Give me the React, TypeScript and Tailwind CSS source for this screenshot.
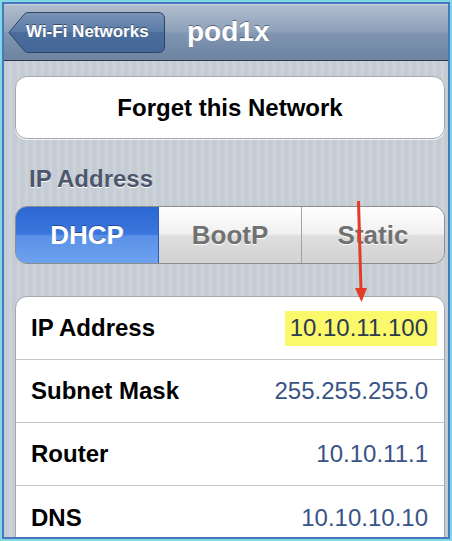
const rows = [
  { label: "IP Address", value: "10.10.11.100", mark: true },
  { label: "Subnet Mask", value: "255.255.255.0" },
  { label: "Router", value: "10.10.11.1" },
  { label: "DNS", value: "10.10.10.10" },
];

function BackButton() {
  return (
    <div className="relative w-[157px] h-[41px] flex items-center">
      <svg className="absolute inset-0" width="157" height="41" viewBox="0 0 157 41">
        <defs>
          <linearGradient id="bb" x1="0" y1="0" x2="0" y2="1">
            <stop offset="0" stopColor="#7b93b6" />
            <stop offset="0.5" stopColor="#587aa6" />
            <stop offset="0.5" stopColor="#4b6d9b" />
            <stop offset="1" stopColor="#44679a" />
          </linearGradient>
        </defs>
        <path
          d="M1 20.5 L16 2.5 Q17.5 0.5 20 0.5 L150 0.5 Q156.5 0.5 156.5 7 L156.5 34 Q156.5 40.5 150 40.5 L20 40.5 Q17.5 40.5 16 38.5 Z"
          fill="url(#bb)"
          stroke="#2f4463"
          strokeWidth="1"
        />
      </svg>
      <span className="relative pl-[18px] text-[17px] font-bold text-white [text-shadow:0_-1px_0_rgba(0,0,0,0.45)]">
        Wi-Fi Networks
      </span>
    </div>
  );
}

function Segment({ label, active, last }: { label: string; active?: boolean; last?: boolean }) {
  return (
    <div
      className={
        active
          ? "flex-1 flex items-center justify-center bg-[linear-gradient(#2c68d3,#3a76db_48%,#5b91e7_52%,#6da2ef)] text-white [text-shadow:0_-1px_0_rgba(0,0,0,0.35)] border-r border-[#2a5bb0]"
          : "flex-1 flex items-center justify-center bg-[linear-gradient(#ffffff,#f0f0f0_48%,#dedede_52%,#d2d2d2)] text-[#727272] [text-shadow:0_1px_0_#ffffff] " +
            (last ? "" : "border-r border-[#a3a3a3]")
      }
    >
      <span className="text-[26px] font-bold">{label}</span>
    </div>
  );
}

export default function App() {
  return (
    <div className="relative w-[452px] h-[541px] bg-[#80d9e3] p-[2px] font-['Liberation_Sans',Arial,sans-serif]">
      <div className="w-full h-full border-2 border-[#4a78c0] flex flex-col overflow-hidden">
        <div className="h-[57px] shrink-0 flex items-center border-b border-[#2d3642] bg-[linear-gradient(#c9d2dd,#b0bccc_4%,#8c9fb9_50%,#7f95b1_52%,#6d84a2)]">
          <div className="ml-[4px]">
            <BackButton />
          </div>
          <span className="ml-[22px] text-[28px] font-bold text-white [text-shadow:0_-1px_0_rgba(0,0,0,0.4)]">
            pod1x
          </span>
        </div>

        <div className="flex-1 pl-[11px] pr-[3px] pt-[15px] bg-[repeating-linear-gradient(90deg,#c5ccd4_0px,#c5ccd4_5px,#cbd2d9_5px,#cbd2d9_8px)]">
          <div className="h-[63px] bg-white rounded-[12px] border border-[#a5a8ad] flex items-center justify-center shadow-[0_1px_0_rgba(255,255,255,0.8)]">
            <span className="text-[24px] font-bold text-black">Forget this Network</span>
          </div>

          <div className="mt-[26px] ml-[14px] h-[28px] leading-[28px] text-[24px] font-bold text-[#4c566c] [text-shadow:0_1px_0_#ffffff]">
            IP Address
          </div>

          <div className="mt-[13px] h-[58px] flex rounded-[12px] overflow-hidden border border-[#8c8c8c]">
            <Segment label="DHCP" active />
            <Segment label="BootP" />
            <Segment label="Static" last />
          </div>

          <div className="mt-[32px] bg-white rounded-t-[12px] border border-[#a5a8ad]">
            {rows.map((r) => (
              <div
                key={r.label}
                className="h-[63px] flex items-center justify-between pl-[15px] pr-[16px] border-b border-[#c4c4c4] last:border-b-0"
              >
                <span className="text-[24px] font-bold text-black">{r.label}</span>
                {r.mark ? (
                  <span className="bg-[#fbf86c] h-[35px] flex items-center pl-[5px] pr-[9px] -mr-[9px] text-[24px] text-[#2c3b4d]">
                    {r.value}
                  </span>
                ) : (
                  <span className="text-[24px] text-[#385487]">{r.value}</span>
                )}
              </div>
            ))}
          </div>
        </div>
      </div>

      <svg className="absolute left-0 top-0 pointer-events-none" width="452" height="541">
        <line x1="358.5" y1="201" x2="361" y2="290" stroke="#e33d28" strokeWidth="3" />
        <polygon points="355,288 367,288 361.5,302" fill="#e33d28" />
      </svg>
    </div>
  );
}
